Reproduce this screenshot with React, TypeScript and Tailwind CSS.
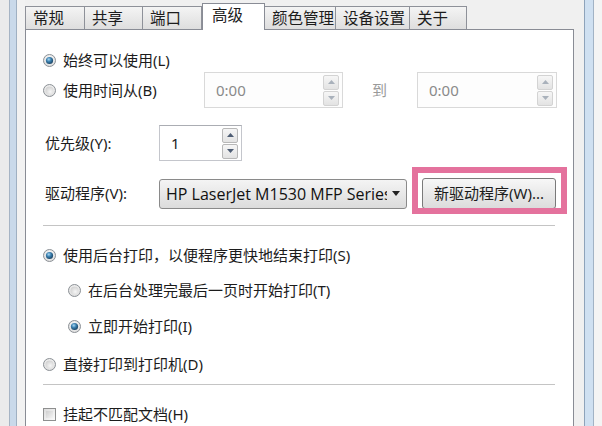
import React from "react";

function Radio({ checked }: { checked?: boolean }) {
  return (
    <svg width="13" height="13" viewBox="0 0 13 13" className="shrink-0">
      <defs>
        <radialGradient id="rOut" cx="50%" cy="40%" r="60%">
          <stop offset="0%" stopColor="#ffffff" />
          <stop offset="100%" stopColor="#dcdcdc" />
        </radialGradient>
        <radialGradient id="rIn" cx="60%" cy="65%" r="70%">
          <stop offset="0%" stopColor="#f6f6f6" />
          <stop offset="100%" stopColor="#cfcfcf" />
        </radialGradient>
        <radialGradient id="rDot" cx="40%" cy="35%" r="70%">
          <stop offset="0%" stopColor="#a8d8f4" />
          <stop offset="45%" stopColor="#3a7fae" />
          <stop offset="100%" stopColor="#173c5a" />
        </radialGradient>
      </defs>
      <circle cx="6.5" cy="6.5" r="6" fill="url(#rOut)" stroke="#8c9196" strokeWidth="1" />
      {checked ? (
        <circle cx="6.5" cy="6.5" r="3.6" fill="url(#rDot)" />
      ) : (
        <circle cx="6.5" cy="6.5" r="4" fill="url(#rIn)" />
      )}
    </svg>
  );
}

function SpinBtn({ up, disabled }: { up?: boolean; disabled?: boolean }) {
  return (
    <div
      className={`w-[16px] h-[15px] border rounded-[2px] flex items-center justify-center bg-linear-to-b from-[#f6f6f6] to-[#e3e3e3] ${
        disabled ? "border-[#d3d3d3]" : "border-[#b8b8b8]"
      }`}
    >
      <svg width="7" height="4" viewBox="0 0 7 4">
        <path
          d={up ? "M0 4 L3.5 0 L7 4 Z" : "M0 0 L3.5 4 L7 0 Z"}
          fill={disabled ? "#a9b1bb" : "#4e5d74"}
        />
      </svg>
    </div>
  );
}

function Spin({ disabled }: { disabled?: boolean }) {
  return (
    <div className="flex flex-col gap-[1px]">
      <SpinBtn up disabled={disabled} />
      <SpinBtn disabled={disabled} />
    </div>
  );
}

function NumInput({
  value,
  width,
  disabled,
}: {
  value: string;
  width: string;
  disabled?: boolean;
}) {
  return (
    <div
      className={`${width} h-[36px] border flex items-center justify-between pl-[11px] pr-[3px] ${
        disabled
          ? "border-[#d9d9d9] bg-[#fdfdfd] text-[#8a8a8a]"
          : "border-[#c4c6cc] border-t-[#abadb3] bg-white text-[#1a1a1a]"
      }`}
    >
      <span className="font-['Noto_Sans',sans-serif] text-[15px]">{value}</span>
      <Spin disabled={disabled} />
    </div>
  );
}

const tabs = [
  { label: "常规", w: "w-[60px]" },
  { label: "共享", w: "w-[58px]" },
  { label: "端口", w: "w-[59px]" },
  { label: "高级", w: "w-[63px]", active: true },
  { label: "颜色管理", w: "w-[71px]" },
  { label: "设备设置", w: "w-[74px]" },
  { label: "关于", w: "w-[57px]" },
];

export default function App() {
  return (
    <div className="w-[602px] h-[426px] overflow-hidden bg-[#f0f0f0] flex font-['Noto_Sans','Noto_Sans_CJK_SC',sans-serif] text-[#1c1c1c]">
      {/* left window frame */}
      <div className="w-[25px] h-full flex shrink-0">
        <div className="w-[9px] bg-[#ebebeb]" />
        <div className="w-[1px] bg-[#a6b4c4]" />
        <div className="w-[6px] bg-[#c9d9ea]" />
        <div className="w-[1px] bg-[#9fb0c2]" />
        <div className="w-[8px] bg-[#f2f2f2]" />
      </div>

      {/* main */}
      <div className="w-[549px] flex flex-col shrink-0">
        {/* tabs */}
        <div className="h-[31px] flex items-end relative">
          {tabs.map((t) =>
            t.active ? (
              <div
                key={t.label}
                className={`${t.w} h-[27px] -mb-[1px] bg-white border border-b-0 border-[#898c95] pl-[9px] pt-[1px] text-[15.5px] leading-[20px] relative z-10`}
              >
                {t.label}
              </div>
            ) : (
              <div
                key={t.label}
                className={`${t.w} h-[23px] bg-linear-to-b from-[#f4f4f4] to-[#dedede] border border-b-0 border-l-0 first:border-l border-[#8e9199] pl-[7px] text-[15.5px] leading-[22px]`}
              >
                {t.label}
              </div>
            )
          )}
        </div>

        {/* panel */}
        <div className="flex-1 bg-white border border-b-0 border-[#898c95] pl-[17px] pr-[15px] flex flex-col text-[15px]">
          {/* row 1 */}
          <div className="h-[24px] mt-[18px] flex items-center gap-[7px]">
            <Radio checked />
            <span>始终可以使用(L)</span>
          </div>

          {/* row 2 */}
          <div className="h-[36px] flex items-center">
            <div className="w-[161px] flex items-center gap-[7px]">
              <Radio />
              <span>使用时间从(B)</span>
            </div>
            <NumInput value="0:00" width="w-[139px]" disabled />
            <div className="w-[74px] pl-[29px] text-[#9a9a9a]">到</div>
            <NumInput value="0:00" width="w-[140px]" disabled />
          </div>

          {/* priority */}
          <div className="h-[36px] mt-[17px] flex items-center">
            <div className="w-[116px] pl-[2px]">优先级(Y):</div>
            <NumInput value="1" width="w-[83px]" />
          </div>

          {/* driver */}
          <div className="h-[31px] mt-[17px] flex items-center">
            <div className="w-[116px] pl-[2px]">驱动程序(V):</div>
            <div className="w-[248px] h-[30px] border border-[#8a8a8a] rounded-[3px] bg-linear-to-b from-[#f4f4f4] to-[#dcdcdc] flex items-center pl-[6px] pr-[6px]">
              <span className="flex-1 overflow-hidden whitespace-nowrap font-['Open_Sans',sans-serif] text-[16px] text-[#111]">
                HP LaserJet M1530 MFP Series
              </span>
              <svg width="8" height="5" viewBox="0 0 8 5" className="ml-[5px] shrink-0">
                <path d="M0 0 L8 0 L4 5 Z" fill="#222" />
              </svg>
            </div>
            <div className="relative ml-[15px]">
              <div className="w-[134px] h-[31px] border border-[#7a7a7a] rounded-[3px] bg-linear-to-b from-[#f7f7f7] to-[#dcdcdc] flex items-center justify-center text-[15px]">
                新驱动程序(W)...
              </div>
              <div className="absolute left-[-10px] top-[-11px] right-[-11px] bottom-[-5px] border-[6px] border-[#e4729d] pointer-events-none" />
            </div>
          </div>

          {/* separator */}
          <div className="h-[1px] bg-[#c4c4c4] mt-[16px] mr-[3px]" />

          {/* spool radio */}
          <div className="h-[24px] mt-[17px] flex items-center gap-[7px]">
            <Radio checked />
            <span>使用后台打印，以便程序更快地结束打印(S)</span>
          </div>
          <div className="h-[24px] mt-[11px] pl-[25px] flex items-center gap-[7px]">
            <Radio />
            <span>在后台处理完最后一页时开始打印(T)</span>
          </div>
          <div className="h-[24px] mt-[12px] pl-[25px] flex items-center gap-[7px]">
            <Radio checked />
            <span>立即开始打印(I)</span>
          </div>
          <div className="h-[24px] mt-[14px] flex items-center gap-[7px]">
            <Radio />
            <span>直接打印到打印机(D)</span>
          </div>

          {/* separator */}
          <div className="h-[1px] bg-[#c4c4c4] mt-[8px] mr-[3px]" />

          {/* checkbox */}
          <div className="h-[24px] mt-[17px] flex items-center gap-[7px]">
            <div className="w-[13px] h-[13px] border border-[#8e8f8f] bg-linear-to-br from-[#dcdcdc] to-[#fbfbfb] p-[2px] shrink-0">
              <div className="w-full h-full bg-linear-to-br from-[#cfcfcf] to-[#f4f4f4]" />
            </div>
            <span>挂起不匹配文档(H)</span>
          </div>
        </div>
      </div>

      {/* right window frame */}
      <div className="w-[28px] h-full flex shrink-0">
        <div className="w-[10px] bg-[#f0f0f0]" />
        <div className="w-[1px] bg-[#8ea3ba]" />
        <div className="w-[8px] bg-[#cfe0f1]" />
        <div className="w-[1px] bg-[#a2b3c5]" />
        <div className="w-[8px] bg-[#f4f4f4]" />
      </div>
    </div>
  );
}
